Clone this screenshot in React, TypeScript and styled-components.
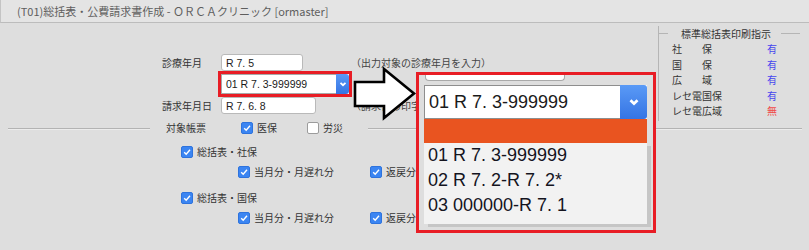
import React from 'react';
import styled, { createGlobalStyle, css } from 'styled-components';

const GlobalStyle = createGlobalStyle`
  html, body {
    margin: 0;
    padding: 0;
  }
  body {
    background: #dedede;
    font-family: "Noto Sans CJK JP", "Liberation Sans", sans-serif;
    font-size: 10px;
    color: #333;
  }
`;

const Page = styled.div`
  position: relative;
  width: 809px;
  height: 250px;
  overflow: hidden;
  background: #dedede;
`;

const TitleBar = styled.div`
  height: 22px;
  display: flex;
  align-items: center;
  padding-left: 16px;
  background: #e4e4e4;
  border-bottom: 1px solid #bcbcbc;
  border-left: 1px solid #c4c4c4;
  color: #5e5e5e;
  font-size: 11px;
  white-space: nowrap;
`;

const TopSection = styled.div`
  display: flex;
  height: 98px;
`;

const FormArea = styled.div`
  flex: 1;
  padding: 31px 0 0 162px;
  display: grid;
  grid-template-columns: 59px 129px auto;
  grid-template-rows: 17px 26px 17px;
  align-content: start;
  align-items: center;
`;

const Label = styled.span`
  color: #333;
  white-space: nowrap;
`;

// the second note runs under the zoom callout, so it is cut at the callout edge
const Note = styled.span<{ $clip?: number }>`
  color: #444;
  white-space: nowrap;
  padding-left: 1px;
  overflow: hidden;
  ${p => p.$clip && css`max-width: ${p.$clip}px;`}
`;

const TextInput = styled.div<{ $width: number }>`
  box-sizing: border-box;
  width: ${p => p.$width}px;
  height: 17px;
  display: flex;
  align-items: center;
  padding-left: 4px;
  background: #fff;
  border: 1px solid #b9b9b9;
  border-radius: 3px;
  font-family: "Liberation Sans", sans-serif;
  font-size: 10.5px;
  color: #222;
`;

const ComboShell = styled.div<{ $big?: boolean }>`
  box-sizing: border-box;
  display: flex;
  background: #fff;
  font-family: "Liberation Sans", sans-serif;
  color: #1a1a1a;
  ${p =>
    p.$big
      ? css`
          width: 223px;
          height: 34px;
          font-size: 18px;
        `
      : css`
          width: 128px;
          height: 20px;
          font-size: 10.5px;
          box-shadow: 0 0 0 3px #e81d25;
        `}
`;

const ComboText = styled.div<{ $big?: boolean }>`
  flex: 1;
  display: flex;
  align-items: center;
  padding-left: 4px;
  border: 1px solid #a8a8a8;
  border-right: none;
  ${p => p.$big && css`border-color: #8e8e8e;`}
`;

const ComboButton = styled.div<{ $big?: boolean }>`
  width: ${p => (p.$big ? 27 : 13)}px;
  display: flex;
  align-items: center;
  justify-content: center;
  background: linear-gradient(#5a9af6, #3574e4);
  border-radius: 0 3px 3px 0;
`;

const StatusGroup = styled.div`
  width: 141px;
  margin: 3px 9px 0 0;
  border-left: 1px solid #b5b5b5;
`;

const GroupHeader = styled.div`
  display: flex;
  align-items: center;
  height: 14px;
  color: #333;
  white-space: nowrap;
  &::before,
  &::after {
    content: '';
    height: 1px;
    background: #b5b5b5;
  }
  &::before {
    width: 9px;
    margin-right: 13px;
  }
  &::after {
    flex: 1;
    margin-left: 10px;
  }
`;

const StatusList = styled.div`
  display: grid;
  grid-template-columns: 95px auto;
  grid-auto-rows: 15.5px;
  align-items: center;
  padding: 1px 0 0 13px;
`;

const StatusValue = styled.span<{ $on: boolean }>`
  color: ${p => (p.$on ? '#4646ee' : '#f04a4a')};
`;

const LegendRow = styled.div`
  display: flex;
  align-items: center;
  height: 16px;
  padding: 0 7px 0 8px;
`;

const Rule = styled.div<{ $width?: number }>`
  height: 1px;
  background: #b3b3b3;
  border-bottom: 1px solid #ececec;
  ${p => (p.$width ? css`width: ${p.$width}px;` : css`flex: 1;`)}
`;

const LegendBody = styled.div`
  display: flex;
  align-items: center;
  margin: -3px 25px 0 16px;
`;

const LegendTitle = styled.span`
  width: 40px;
  margin-right: 35px;
`;

const CheckItem = styled.label<{ $gapAfter?: number }>`
  display: inline-flex;
  align-items: center;
  gap: 4px;
  color: #333;
  white-space: nowrap;
  ${p => p.$gapAfter && css`margin-right: ${p.$gapAfter}px;`}
`;

const Box = styled.span<{ $checked: boolean }>`
  box-sizing: border-box;
  flex: none;
  width: 12px;
  height: 12px;
  border-radius: 2px;
  display: inline-flex;
  align-items: center;
  justify-content: center;
  ${p =>
    p.$checked
      ? css`
          background: #3b85f2;
          border: 1px solid #2e73dd;
        `
      : css`
          background: #fff;
          border: 1px solid #9c9c9c;
        `}
`;

const ChecksArea = styled.div`
  padding: 8px 0 0 181px;
`;

const CheckGroup = styled.div`
  display: flex;
  flex-direction: column;
  gap: 6px;
  & + & {
    margin-top: 14px;
  }
`;

const CheckRow = styled.div`
  height: 13px;
  display: flex;
  align-items: center;
`;

const SubRow = styled.div`
  height: 13px;
  margin-left: 57px;
  display: grid;
  grid-template-columns: 132px auto;
  align-items: center;
`;

const Arrow = styled.svg`
  position: absolute;
  left: 352px;
  top: 66px;
`;

const Callout = styled.div`
  position: absolute;
  left: 416px;
  top: 72px;
  width: 240px;
  height: 161px;
  box-sizing: border-box;
  border: 3px solid #e81d25;
  background: #dedede;
  overflow: hidden;
  display: flex;
  flex-direction: column;
  padding-left: 5px;
`;

const PeekInput = styled.div`
  width: 138px;
  height: 5px;
  margin-left: 1px;
  background: #fff;
  border: 1px solid #a9a9a9;
  border-top: none;
  border-radius: 0 0 4px 4px;
  margin-bottom: 4px;
`;

const Highlight = styled.div`
  width: 223px;
  height: 24px;
  background: #e95420;
`;

const OptionList = styled.div`
  width: 223px;
  height: 81px;
  background: #f2f2f2;
  box-shadow: 4px 3px 0 #c6c6c6;
`;

const Option = styled.div`
  height: 25px;
  display: flex;
  align-items: center;
  padding-left: 4px;
  font-family: "Liberation Sans", sans-serif;
  font-size: 18px;
  color: #14141e;
`;

const Check = () => (
  <svg width="10" height="10" viewBox="0 0 10 10">
    <path d="M2.2 5.2 L4.2 7.2 L8 2.8" fill="none" stroke="#fff" strokeWidth="1.4" />
  </svg>
);

const CheckBox: React.FC<{ label: string; checked?: boolean; gapAfter?: number }> = ({ label, checked = true, gapAfter }) => (
  <CheckItem $gapAfter={gapAfter}>
    <Box $checked={checked}>{checked && <Check />}</Box>
    {label}
  </CheckItem>
);

const Chevron: React.FC<{ size: number; weight?: number }> = ({ size, weight = 1.8 }) => (
  <svg width={size} height={size} viewBox="0 0 10 10">
    <polyline points="2.5,3.8 5,6.2 7.5,3.8" fill="none" stroke="#fff" strokeWidth={weight} />
  </svg>
);

const status = [
  { label: '社　　保', on: true },
  { label: '国　　保', on: true },
  { label: '広　　域', on: true },
  { label: 'レセ電国保', on: true },
  { label: 'レセ電広域', on: false },
];

const options = ['01 R 7. 3-999999', '02 R 7. 2-R 7. 2*', '03 000000-R 7. 1'];

const App: React.FC = () => (
  <Page>
    <GlobalStyle />
    <TitleBar>(T01)総括表・公費請求書作成 - ＯＲＣＡクリニック [ormaster]</TitleBar>

    <TopSection>
      <FormArea>
        <Label>診療年月</Label>
        <TextInput $width={82}>R 7. 5</TextInput>
        <Note>（出力対象の診療年月を入力）</Note>

        <span />
        <ComboShell>
          <ComboText>01 R 7. 3-999999</ComboText>
          <ComboButton>
            <Chevron size={10} />
          </ComboButton>
        </ComboShell>
        <span />

        <Label>請求年月日</Label>
        <TextInput $width={95}>R 7. 6. 8</TextInput>
        <Note $clip={66}>（請求書の印字日を入力）</Note>
      </FormArea>

      <StatusGroup>
        <GroupHeader>標準総括表印刷指示</GroupHeader>
        <StatusList>
          {status.map(s => (
            <React.Fragment key={s.label}>
              <Label>{s.label}</Label>
              <StatusValue $on={s.on}>{s.on ? '有' : '無'}</StatusValue>
            </React.Fragment>
          ))}
        </StatusList>
      </StatusGroup>
    </TopSection>

    <LegendRow>
      <Rule $width={142} />
      <LegendBody>
        <LegendTitle>対象帳票</LegendTitle>
        <CheckBox label="医保" gapAfter={30} />
        <CheckBox label="労災" checked={false} />
      </LegendBody>
      <Rule />
    </LegendRow>

    <ChecksArea>
      {['総括表・社保', '総括表・国保'].map(title => (
        <CheckGroup key={title}>
          <CheckRow>
            <CheckBox label={title} />
          </CheckRow>
          <SubRow>
            <CheckBox label="当月分・月遅れ分" />
            <CheckBox label="返戻分" />
          </SubRow>
        </CheckGroup>
      ))}
    </ChecksArea>

    <Arrow width="68" height="58" viewBox="0 0 68 58">
      <polygon
        points="3,16 32,16 32,3 62,27.5 32,52 32,40 3,40"
        fill="#fff"
        stroke="#000"
        strokeWidth="2.6"
        strokeLinejoin="miter"
      />
    </Arrow>

    <Callout>
      <PeekInput />
      <ComboShell $big>
        <ComboText $big>01 R 7. 3-999999</ComboText>
        <ComboButton $big>
          <Chevron size={14} weight={2} />
        </ComboButton>
      </ComboShell>
      <Highlight />
      <OptionList>
        {options.map(o => (
          <Option key={o}>{o}</Option>
        ))}
      </OptionList>
    </Callout>
  </Page>
);

export default App;
